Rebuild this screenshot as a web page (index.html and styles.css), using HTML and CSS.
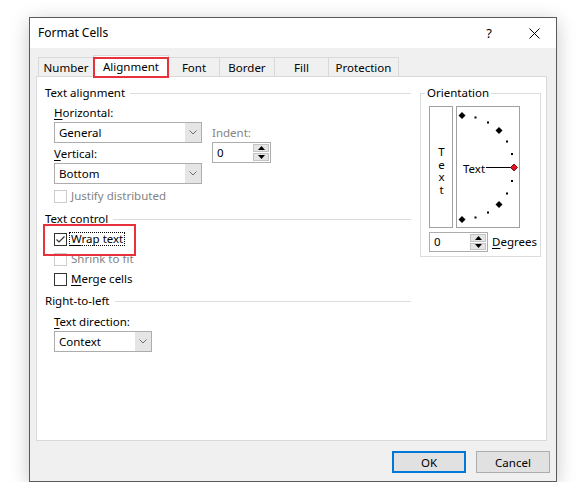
FILE: index.html
```html
<!DOCTYPE html>
<html>
<head>
<meta charset="utf-8">
<link rel="stylesheet" href="styles.css">
</head>
<body>
<div class="dialog">
  <div class="titlebar">
    <span class="title">Format Cells</span>
    <span class="tb-btn help">?</span>
    <span class="tb-btn close"><svg width="11" height="11" viewBox="0 0 11 11"><path d="M0.5 0.5 L10.5 10.5 M10.5 0.5 L0.5 10.5" stroke="#000" stroke-width="1" fill="none"/></svg></span>
  </div>
  <div class="body">
    <div class="tabs">
      <div class="tab t-number">Number</div>
      <div class="tab t-align active">Alignment</div>
      <div class="tab t-font">Font</div>
      <div class="tab t-border">Border</div>
      <div class="tab t-fill">Fill</div>
      <div class="tab t-prot">Protection</div>
    </div>
    <div class="panel">
      <div class="left">
        <div class="group-head">Text alignment</div>
        <div class="indent">
          <div class="halign">
            <div class="col-combos">
              <div class="label lbl-h"><u>H</u>orizontal:</div>
              <div class="combo wide"><span class="combo-val">General</span><span class="drop"><svg width="8" height="5" viewBox="0 0 8 5"><polyline points="0.5,0.5 4,4 7.5,0.5" fill="none" stroke="#707070" stroke-width="1"/></svg></span></div>
              <div class="label lbl-v"><u>V</u>ertical:</div>
              <div class="combo wide"><span class="combo-val">Bottom</span><span class="drop"><svg width="8" height="5" viewBox="0 0 8 5"><polyline points="0.5,0.5 4,4 7.5,0.5" fill="none" stroke="#707070" stroke-width="1"/></svg></span></div>
            </div>
            <div class="col-indent">
              <div class="label disabled">Indent:</div>
              <div class="spin indent-spin">
                <span class="spin-val">0</span>
                <span class="spin-btns">
                  <span class="spin-b"><svg width="7" height="4" viewBox="0 0 7 4"><polygon points="0,4 3.5,0 7,4" fill="#000"/></svg></span>
                  <span class="spin-b"><svg width="7" height="4" viewBox="0 0 7 4"><polygon points="0,0 3.5,4 7,0" fill="#000"/></svg></span>
                </span>
              </div>
            </div>
          </div>
          <div class="check-row row-justify disabled"><span class="cb"></span><span class="cb-label">Justify distributed</span></div>
        </div>
        <div class="group-head gh-control">Text control</div>
        <div class="indent">
          <div class="check-row row-wrap"><span class="cb checked"><svg width="11" height="11" viewBox="0 0 11 11"><polyline points="1.5,5.5 4,8 9.5,2.5" fill="none" stroke="#333" stroke-width="1.2"/></svg></span><span class="cb-label focus"><u>W</u>rap text</span></div>
          <div class="check-row row-next disabled"><span class="cb"></span><span class="cb-label">Shrink to fit</span></div>
          <div class="check-row row-next"><span class="cb"></span><span class="cb-label"><u>M</u>erge cells</span></div>
        </div>
        <div class="group-head gh-rtl">Right-to-left</div>
        <div class="indent">
          <div class="label lbl-dir"><u>T</u>ext direction:</div>
          <div class="combo narrow"><span class="combo-val">Context</span><span class="drop"><svg width="8" height="5" viewBox="0 0 8 5"><polyline points="0.5,0.5 4,4 7.5,0.5" fill="none" stroke="#707070" stroke-width="1"/></svg></span></div>
        </div>
      </div>
      <fieldset class="orient">
        <legend>Orientation</legend>
        <div class="orient-boxes">
          <div class="vtext"><span class="vword">Text</span></div>
          <div class="dial">
            <svg width="62" height="120" viewBox="0 0 62 120">
              <g fill="#000">
                <polygon points="5,5 8.5,8.5 5,12 1.5,8.5"/>
                <polygon points="42,20 45.5,23.5 42,27 38.5,23.5"/>
                <polygon points="42,94 45.5,97.5 42,101 38.5,97.5"/>
                <polygon points="5,109 8.5,112.5 5,116 1.5,112.5"/>
                <rect x="17.5" y="9.5" width="2" height="2"/>
                <rect x="30" y="14.5" width="2" height="2"/>
                <rect x="49" y="33.5" width="2" height="2"/>
                <rect x="54" y="46" width="2" height="2"/>
                <rect x="54" y="73" width="2" height="2"/>
                <rect x="49" y="85.5" width="2" height="2"/>
                <rect x="30" y="104.5" width="2" height="2"/>
                <rect x="17.5" y="109.5" width="2" height="2"/>
              </g>
              <line x1="29" y1="60.5" x2="54" y2="60.5" stroke="#000" stroke-width="1"/>
              <polygon points="57,57 60.5,60.5 57,64 53.5,60.5" fill="#e81123" stroke="#400" stroke-width="0.8"/>
              <text x="6" y="65.5" class="dial-text">Text</text>
            </svg>
          </div>
        </div>
        <div class="deg-row">
          <div class="spin deg-spin">
            <span class="spin-val">0</span>
            <span class="spin-btns">
              <span class="spin-b"><svg width="7" height="4" viewBox="0 0 7 4"><polygon points="0,4 3.5,0 7,4" fill="#000"/></svg></span>
              <span class="spin-b"><svg width="7" height="4" viewBox="0 0 7 4"><polygon points="0,0 3.5,4 7,0" fill="#000"/></svg></span>
            </span>
          </div>
          <span class="deg-label"><u>D</u>egrees</span>
        </div>
      </fieldset>
    </div>
    <div class="buttons">
      <button class="btn default">OK</button>
      <button class="btn">Cancel</button>
    </div>
  </div>
</div>
</body>
</html>
```

FILE: styles.css
```css
* { box-sizing: border-box; }
html, body { margin: 0; padding: 0; background: #ffffff; }
body {
  font-family: "Noto Sans", "Open Sans", sans-serif;
  font-size: 11.5px;
  line-height: 16px;
  color: #000;
}
u { text-decoration: underline; text-underline-offset: 2px; }

.dialog {
  margin: 17px 0 0 29px;
  width: 528px;
  height: 465px;
  border: 1px solid #5a5a5a;
  background: #f0f0f0;
  box-shadow: 0 4px 18px rgba(0, 0, 0, 0.22);
  display: flex;
  flex-direction: column;
}

.titlebar {
  height: 30px;
  background: #ffffff;
  display: flex;
  align-items: center;
  padding-left: 8px;
  flex: none;
}
.title { flex: 1; font-size: 12px; }
.tb-btn { display: flex; justify-content: center; align-items: center; height: 30px; }
.help { width: 46px; font-size: 13px; }
.close { width: 44px; }

.body {
  flex: 1;
  padding: 9px 6px 0 6px;
  display: flex;
  flex-direction: column;
}

.tabs {
  display: flex;
  align-items: flex-end;
  height: 20px;
  margin-left: 2px;
}
.tab {
  height: 20px;
  border: 1px solid #d9d9d9;
  border-bottom: none;
  background: #f0f0f0;
  display: flex;
  justify-content: center;
  align-items: center;
  margin-left: -1px;
  padding-top: 1px;
  flex: none;
}
.t-number { width: 56px; margin-left: 0; }
.t-align { width: 76px; }
.t-font { width: 52px; }
.t-border { width: 56px; }
.t-fill { width: 55px; }
.t-prot { width: 71px; }
.tab.active {
  height: 22px;
  background: #ffffff;
  position: relative;
  z-index: 2;
  padding-top: 1px;
}
.tab.active::after {
  content: "";
  position: absolute;
  left: -1px;
  right: -1px;
  top: 1px;
  bottom: -1px;
  border: 2px solid #e8313b;
}

.panel {
  width: 511px;
  height: 365px;
  margin-top: -1px;
  background: #ffffff;
  border: 1px solid #d9d9d9;
  padding: 8px 0 0 8px;
  display: flex;
  gap: 9px;
  align-items: flex-start;
}

.left { width: 366px; flex: none; }

.group-head {
  display: flex;
  align-items: center;
  height: 16px;
}
.group-head::after {
  content: "";
  flex: 1;
  height: 1px;
  background: #dcdcdc;
  margin-left: 5px;
}
.gh-control { margin-top: 7px; }
.gh-rtl { margin-top: 6px; }

.indent { padding-left: 9px; }

.halign { display: flex; margin-top: 4px; }
.col-combos { width: 148px; flex: none; }
.col-indent { margin-left: 10px; padding-top: 20px; }

.label { height: 16px; }
.lbl-v { margin-top: 3px; }
.lbl-dir { margin-top: 5px; }
.disabled, .disabled .cb-label { color: #838383; }

.combo {
  margin-top: 1px;
  height: 21px;
  border: 1px solid #adadad;
  background: #ffffff;
  display: flex;
  align-items: stretch;
}
.combo.wide { width: 148px; }
.combo.narrow { width: 98px; }
.combo-val { flex: 1; padding-left: 4px; line-height: 19px; }
.drop {
  width: 16px;
  background: #e5e5e5;
  display: flex;
  justify-content: center;
  align-items: center;
}

.spin {
  display: flex;
  border: 1px solid #adadad;
  background: #ffffff;
  width: 59px;
  flex: none;
}
.indent-spin { height: 21px; margin-top: 1px; }
.deg-spin { height: 20px; }
.spin-val { flex: 1; padding-left: 4px; display: flex; align-items: center; }
.spin-btns {
  width: 17px;
  display: flex;
  flex-direction: column;
  padding: 1px 1px 1px 0;
  gap: 1px;
}
.spin-b {
  flex: 1;
  background: #e5e5e5;
  border: 1px solid #c4c4c4;
  display: flex;
  justify-content: center;
  align-items: center;
}

.check-row {
  display: flex;
  align-items: center;
  height: 16px;
}
.row-justify { margin-top: 4px; }
.row-wrap { margin-top: 4px; position: relative; }
.row-next { margin-top: 4px; }
.cb {
  width: 13px;
  height: 13px;
  border: 1px solid #333333;
  background: #ffffff;
  display: flex;
  justify-content: center;
  align-items: center;
  flex: none;
}
.disabled .cb { border-color: #cccccc; }
.cb-label { margin-left: 4px; }
.cb-label.focus {
  margin-left: 3px;
  padding: 0 1px;
  line-height: 12px;
  outline: 1px dotted #000;
}
.row-wrap::after {
  content: "";
  position: absolute;
  left: -11px;
  top: -7px;
  width: 89px;
  height: 28px;
  border: 2px solid #e8313b;
}

.orient {
  margin: 0;
  width: 121px;
  flex: none;
  border: 1px solid #dcdcdc;
  padding: 5px 2px 4px 8px;
  min-width: 0;
}
.orient legend {
  padding: 0 2px;
  margin-left: -4px;
  line-height: 16px;
}
.orient-boxes { display: flex; gap: 3px; }
.vtext {
  width: 24px;
  height: 122px;
  border: 1px solid #a0a0a0;
  display: flex;
  align-items: center;
  justify-content: center;
  padding-top: 3px;
  flex: none;
}
.vword {
  writing-mode: vertical-lr;
  text-orientation: upright;
  letter-spacing: -2.5px;
  line-height: 16px;
}
.dial {
  width: 64px;
  height: 122px;
  border: 1px solid #a0a0a0;
  flex: none;
}
.dial svg { display: block; }
.dial-text { font-family: "Noto Sans", sans-serif; font-size: 11.5px; }
.deg-row {
  display: flex;
  align-items: center;
  margin-top: 4px;
  gap: 4px;
}
.deg-label { white-space: nowrap; }

.buttons {
  display: flex;
  justify-content: flex-end;
  gap: 10px;
  margin-top: 10px;
}
.btn {
  width: 74px;
  height: 22px;
  background: #e1e1e1;
  border: 1px solid #adadad;
  font-family: "Noto Sans", sans-serif;
  font-size: 11.5px;
  color: #000;
  padding: 0;
  margin: 0;
}
.btn.default { border: 2px solid #0078d7; }
```
